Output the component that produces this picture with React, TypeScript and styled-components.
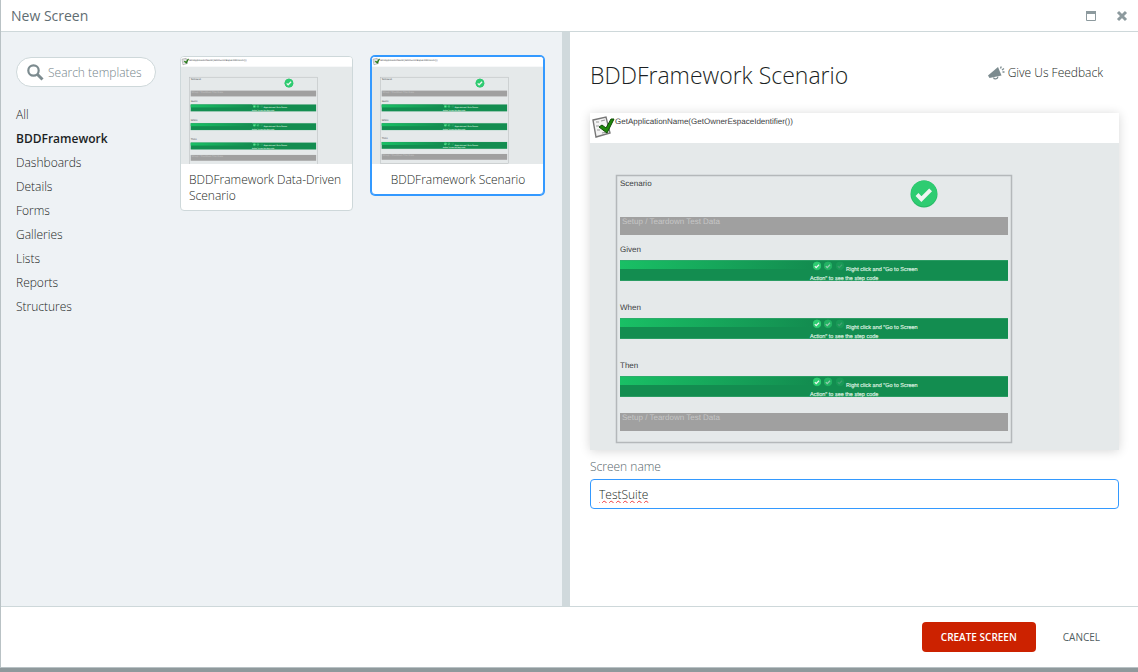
import React, { useId, useState } from "react";
import styled, { createGlobalStyle, css } from "styled-components";

const GlobalStyle = createGlobalStyle`
  *, *::before, *::after { box-sizing: border-box; }
  body {
    margin: 0;
    background: #8f999c;
    color: #1b1f24;
    font-family: "Open Sans", "Noto Sans", sans-serif;
    font-size: 12px;
    font-weight: 300;
    line-height: 16px;
  }
  button, input { font: inherit; color: inherit; }
`;

const Page = styled.div`
  display: flex;
  flex-direction: column;
  min-height: 100vh;
  padding-bottom: 4px;
`;

const Dialog = styled.div`
  flex: 1;
  display: flex;
  flex-direction: column;
  background: #fff;
  border-left: 1px solid #b9c2c5;
  border-bottom: 1px solid #b9c2c5;
`;

const TitleBar = styled.header`
  display: flex;
  align-items: center;
  justify-content: space-between;
  height: 32px;
  padding: 0 10px;
  border-bottom: 1px solid #ced8da;
`;

const WindowTitle = styled.h1`
  margin: 0;
  font-size: 14px;
  font-weight: 400;
  color: #5f6d72;
`;

const WindowControls = styled.div`
  display: flex;
  gap: 18px;
`;

const IconButton = styled.button`
  display: flex;
  padding: 0;
  border: 0;
  background: none;
  color: #8d9a9e;
  cursor: pointer;
`;

const Body = styled.main`
  flex: 1;
  display: grid;
  grid-template-columns: 561fr 8px 568fr;
`;

const Browser = styled.section`
  display: flex;
  align-items: flex-start;
  gap: 24px;
  padding: 24px 15px;
  background: #eef2f5;
`;

const Divider = styled.div`
  background: #d0d9dc;
`;

const Sidebar = styled.nav`
  flex: none;
  width: 140px;
  padding-top: 1px;
`;

const SearchBox = styled.label`
  display: flex;
  align-items: center;
  gap: 4px;
  height: 30px;
  padding: 0 8px 0 10px;
  border: 1px solid #ced8da;
  border-radius: 15px;
  background: #fff;
  color: #7c8b8f;
  svg { flex: none; }
`;

const SearchInput = styled.input`
  width: 100%;
  min-width: 0;
  padding: 2px 0 0;
  border: 0;
  outline: 0;
  background: none;
  &::placeholder { color: #75848a; opacity: 1; }
`;

const CategoryList = styled.ul`
  margin: 16px 0 0;
  padding: 0;
  list-style: none;
`;

const CategoryLink = styled.a<{ $active: boolean }>`
  display: block;
  line-height: 24px;
  color: inherit;
  text-decoration: none;
  font-weight: ${(p) => (p.$active ? 600 : 300)};
`;

const Cards = styled.div`
  display: flex;
  flex-wrap: wrap;
  align-items: flex-start;
  gap: 18px;
`;

const Card = styled.button<{ $selected: boolean }>`
  width: 173px;
  padding: 0;
  overflow: hidden;
  border: 1px solid #ced8da;
  border-radius: 4px;
  background: #fff;
  text-align: center;
  cursor: pointer;
  ${(p) =>
    p.$selected &&
    css`
      border-color: #3399ff;
      box-shadow: 0 0 0 1px #3399ff;
    `}
`;

const Thumb = styled.div`
  height: 107px;
  overflow: hidden;
`;

const CardLabel = styled.span`
  display: inline-block;
  padding: 8px 7px 6px 8px;
  text-align: left;
`;

const Details = styled.section`
  padding: 27px 19px 24px 20px;
`;

const DetailsHeader = styled.div`
  display: flex;
  align-items: flex-start;
  justify-content: space-between;
  margin-bottom: 22px;
  padding-right: 16px;
`;

const TemplateTitle = styled.h2`
  margin: 0;
  font-size: 23px;
  font-weight: 300;
  line-height: 32px;
`;

const FeedbackLink = styled.a`
  display: flex;
  align-items: center;
  gap: 3px;
  line-height: 28px;
  color: inherit;
  text-decoration: none;
`;

const Preview = styled.div`
  box-shadow: 0 1px 10px rgba(0, 0, 0, 0.16);
`;

const Drawing = styled.svg`
  display: block;
  width: 100%;
  font-family: "Liberation Sans", Arial, sans-serif;
  font-weight: 400;
  text-rendering: geometricPrecision;
`;

const FieldLabel = styled.label`
  display: block;
  margin: 9px 0 4px;
  color: #56666b;
`;

const NameInput = styled.input`
  display: block;
  width: 100%;
  height: 30px;
  padding: 0 8px;
  border: 1px solid #3399ff;
  border-radius: 4px;
  outline: 0;
  background: #fff;
  line-height: 28px;
  text-decoration: underline wavy #f03a3a 1px;
  text-decoration-skip-ink: none;
  text-underline-offset: 1px;
`;

const Footer = styled.footer`
  display: flex;
  align-items: center;
  justify-content: flex-end;
  gap: 8px;
  height: 61px;
  padding: 0 19px;
  border-top: 1px solid #ced8da;
`;

const ActionButton = styled.button<{ $primary?: boolean }>`
  height: 30px;
  padding: 0 19px;
  border: 0;
  border-radius: 4px;
  background: ${(p) => (p.$primary ? "#cc2200" : "transparent")};
  color: ${(p) => (p.$primary ? "#fff" : "#4f5d61")};
  font-size: 10px;
  font-weight: ${(p) => (p.$primary ? 600 : 400)};
  text-transform: uppercase;
  cursor: pointer;
`;

const Tick = ({ x, y, r, opacity = 1 }: { x: number; y: number; r: number; opacity?: number }) => (
  <g transform={`translate(${x} ${y}) scale(${r / 13})`} opacity={opacity}>
    <circle r="13.5" fill="#27b865" />
    <circle cy="-0.6" r="13" fill="#2ecc71" />
    <path d="M-7 .5l4.400 4.600L6.600-4.200" fill="none" stroke="#f1f5f3" strokeWidth="4" />
  </g>
);

const Step = ({ y, name, fill }: { y: number; name: string; fill: string }) => (
  <g transform={`translate(0 ${y})`}>
    <text x="30" y="-8" fontSize="8" fill="#3c4042">{name}</text>
    <rect x="30" width="388" height="21" fill="#138d50" />
    <rect x="30" width="190" height="9" fill={fill} />
    <path d="M30 .5h388M30 20.500h388" stroke="#3aa670" strokeWidth="1" opacity=".6" />
    <Tick x={227} y={6} r={4} />
    <Tick x={238} y={6} r={4} opacity={0.6} />
    <Tick x={250} y={6} r={4} opacity={0.2} />
    <g fontSize="5.5" fill="#d5ecdf" stroke="#d5ecdf" strokeWidth=".2">
      <text x="256" y="11">Right click and "Go to Screen</text>
      <text x="220" y="20">Action" to see the step code</text>
    </g>
  </g>
);

const DataBar = ({ y }: { y: number }) => (
  <g transform={`translate(0 ${y})`}>
    <rect x="30" width="388" height="18" fill="#a0a0a0" />
    <text x="32" y="7" fontSize="8" fill="#c6c6c6">Setup / Teardown Test Data</text>
  </g>
);

const ScenarioDrawing = ({ extended = false }: { extended?: boolean }) => {
  const id = useId();
  const fill = `url(#${id})`;
  return (
    <Drawing viewBox="0 0 529 337" role="img" aria-label="Template preview">
      <defs>
        <linearGradient id={id}>
          <stop offset="0" stopColor="#19c065" />
          <stop offset="1" stopColor="#138d50" />
        </linearGradient>
      </defs>
      <rect width="529" height="337" fill="#e5e9ea" />
      <rect width="529" height="30" fill="#fff" />
      <path d="M3 7l13-3 4 16-14 4z" fill="#f4f4f4" stroke="#777" strokeWidth="1.400" />
      <path d="M6 9l3 0M11 8l4-1M6 13l3 0M7 17l3 0M12 20l5-1" stroke="#999" strokeWidth="1.200" />
      <path d="M9 14l3-2 4 3 5-9 3 0-7 14z" fill="#1e8a0a" stroke="#0d4a05" strokeWidth="1" />
      <text x="25" y="11" fontSize="8" fill="#3c4042">GetApplicationName(GetOwnerEspaceIdentifier())</text>
      <rect x="26.500" y="62.500" width="395" height={extended ? 290 : 267} fill="none" stroke="#b4b8ba" strokeWidth="1.500" />
      <text x="30" y="72.500" fontSize="8" fill="#3c4042">Scenario</text>
      <Tick x={334} y={81} r={13} />
      <DataBar y={104} />
      <Step y={147} name="Given" fill={fill} />
      <Step y={205} name="When" fill={fill} />
      <Step y={extended ? 265 : 263} name="Then" fill={fill} />
      <DataBar y={extended ? 303 : 300} />
    </Drawing>
  );
};

const categories = ["All", "BDDFramework", "Dashboards", "Details", "Forms", "Galleries", "Lists", "Reports", "Structures"];

const templates = [
  { name: "BDDFramework Data-Driven Scenario", extended: true },
  { name: "BDDFramework Scenario", extended: false },
];

export default function App() {
  const [category, setCategory] = useState("BDDFramework");
  const [selected, setSelected] = useState(1);
  const [screenName, setScreenName] = useState("TestSuite");
  const template = templates[selected];

  return (
    <>
      <GlobalStyle />
      <Page>
        <Dialog role="dialog" aria-labelledby="dialog-title">
          <TitleBar>
            <WindowTitle id="dialog-title">New Screen</WindowTitle>
            <WindowControls>
              <IconButton aria-label="Maximize">
                <svg width="14" height="12" viewBox="0 0 14 12">
                  <path d="M2.500 1.500h9v9h-9z" fill="none" stroke="currentColor" />
                  <path d="M2 1h10v3H2z" fill="currentColor" />
                </svg>
              </IconButton>
              <IconButton aria-label="Close">
                <svg width="12" height="12" viewBox="0 0 12 12">
                  <path d="M2 2l8 8M10 2l-8 8" stroke="currentColor" strokeWidth="3" />
                </svg>
              </IconButton>
            </WindowControls>
          </TitleBar>
          <Body>
            <Browser>
              <Sidebar>
                <SearchBox>
                  <svg width="17" height="17" viewBox="0 0 17 17" fill="none" stroke="currentColor">
                    <circle cx="6.500" cy="6.500" r="5.200" strokeWidth="2.200" />
                    <path d="M10.500 10.500l5 5" strokeWidth="3" />
                  </svg>
                  <SearchInput type="text" placeholder="Search templates" aria-label="Search templates" />
                </SearchBox>
                <CategoryList>
                  {categories.map((c) => (
                    <li key={c}>
                      <CategoryLink href={`#${c}`} $active={c === category} onClick={() => setCategory(c)}>
                        {c}
                      </CategoryLink>
                    </li>
                  ))}
                </CategoryList>
              </Sidebar>
              <Cards>
                {templates.map((t, i) => (
                  <Card key={t.name} $selected={i === selected} aria-pressed={i === selected} onClick={() => setSelected(i)}>
                    <Thumb>
                      <ScenarioDrawing extended={t.extended} />
                    </Thumb>
                    <CardLabel>{t.name}</CardLabel>
                  </Card>
                ))}
              </Cards>
            </Browser>
            <Divider />
            <Details>
              <DetailsHeader>
                <TemplateTitle>{template.name}</TemplateTitle>
                <FeedbackLink href="#feedback">
                  <svg width="17" height="14" viewBox="0 0 17 14" fill="none" stroke="#7c8b8f">
                    <path d="M0 9.500L10 1l3.500 8.500L1.500 12z" fill="#7c8b8f" stroke="none" />
                    <path d="M5.500 11.500c.5 2 4 2 4.500-.800" strokeWidth="1.200" />
                    <path d="M12.500 2.500l.8-2M14 4l2-1.500M14.500 6h2" strokeWidth="1.300" />
                  </svg>
                  Give Us Feedback
                </FeedbackLink>
              </DetailsHeader>
              <Preview>
                <ScenarioDrawing extended={template.extended} />
              </Preview>
              <FieldLabel htmlFor="screen-name">Screen name</FieldLabel>
              <NameInput id="screen-name" value={screenName} onChange={(e) => setScreenName(e.target.value)} />
            </Details>
          </Body>
          <Footer>
            <ActionButton $primary>Create Screen</ActionButton>
            <ActionButton>Cancel</ActionButton>
          </Footer>
        </Dialog>
      </Page>
    </>
  );
}
